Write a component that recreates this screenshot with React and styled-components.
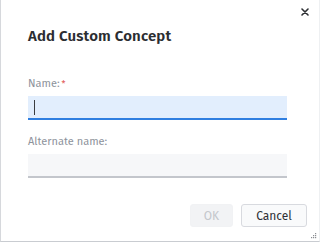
import React, { useState } from 'react';
import styled, { createGlobalStyle } from 'styled-components';

const GlobalStyle = createGlobalStyle`
    html, body {
        margin: 0;
        padding: 0;
        background: #ffffff;
    }
    body {
        font-family: "Fira Sans", "Open Sans", "Noto Sans", sans-serif;
    }
`

const Dialog = styled.div`
    position: relative;
    box-sizing: border-box;
    width: 320px;
    height: 242px;
    background: #ffffff;
    border-left: 1px solid #d6d8dc;
    border-right: 1px solid #eef0f2;
    border-bottom: 1px solid #c9ccd1;
    padding: 0 33px 0 27px;
    display: flex;
    flex-direction: column;
`
const CloseButton = styled.button`
    position: absolute;
    top: 6px;
    right: 8px;
    width: 12px;
    height: 12px;
    padding: 0;
    border: none;
    background: transparent;
    display: flex;
    align-items: center;
    justify-content: center;
    cursor: pointer;
`
const Title = styled.h2`
    margin: 26px 0 0;
    font-size: 15px;
    font-weight: 600;
    color: #2b2d31;
    line-height: 20px;
    letter-spacing: 0.15px;
`
const Field = styled.div`
    display: flex;
    flex-direction: column;
    margin-top: ${props => props.top}px;
`
const Label = styled.label`
    font-size: 11px;
    line-height: 14px;
    color: #8e939c;
    margin-bottom: 5px;
`
const Required = styled.span`
    color: #e0524f;
    font-size: 9px;
    vertical-align: top;
    margin-left: 2px;
`
const InputWrap = styled.div`
    position: relative;
    width: 259px;
`
const Caret = styled.span`
    position: absolute;
    left: 6px;
    top: 4px;
    width: 1px;
    height: 15px;
    background: #3a3c40;
    pointer-events: none;
`
const Input = styled.input`
    box-sizing: border-box;
    width: 259px;
    height: 24px;
    border: none;
    border-bottom: ${props => props.focused ? '2px solid #2f7ee0' : '2px solid #c3c6cc'};
    background: ${props => props.focused ? '#e2eefd' : '#f6f7f9'};
    padding: 0 6px;
    font-family: inherit;
    font-size: 12px;
    color: #333;
    outline: none;
    border-radius: 0;
    display: block;
`
const Footer = styled.div`
    margin-top: auto;
    margin-bottom: 14px;
    display: flex;
    justify-content: flex-end;
    gap: 8px;
    margin-right: -21px;
`
const Button = styled.button`
    box-sizing: border-box;
    height: 23px;
    min-width: ${props => props.wide ? 66 : 43}px;
    padding: 0 10px;
    border-radius: 3px;
    font-family: inherit;
    font-size: 12px;
    border: 1px solid ${props => props.disabled ? '#f1f2f4' : '#d8dadf'};
    background: ${props => props.disabled ? '#f2f3f5' : '#f9fafb'};
    color: ${props => props.disabled ? '#c4c7cc' : '#2f3136'};
`
const Grip = styled.svg`
    position: absolute;
    right: 2px;
    bottom: 2px;
`

const App = () => {
    const [name, setName] = useState('');
    const [alt, setAlt] = useState('');
    return (
        <>
            <GlobalStyle />
            <Dialog>
                <CloseButton aria-label="Close">
                    <svg width="8" height="8" viewBox="0 0 8 8">
                        <path d="M1 1 L7 7 M7 1 L1 7" stroke="#2d2f33" strokeWidth="1.6" strokeLinecap="round" />
                    </svg>
                </CloseButton>
                <Title>Add Custom Concept</Title>
                <Field top={31}>
                    <Label>Name:<Required>*</Required></Label>
                    <InputWrap>
                        <Input focused value={name} onChange={e => setName(e.target.value)} />
                        {name === '' && <Caret />}
                    </InputWrap>
                </Field>
                <Field top={15}>
                    <Label>Alternate name:</Label>
                    <InputWrap>
                        <Input value={alt} onChange={e => setAlt(e.target.value)} />
                    </InputWrap>
                </Field>
                <Footer>
                    <Button disabled>OK</Button>
                    <Button wide>Cancel</Button>
                </Footer>
                <Grip width="6" height="6" viewBox="0 0 6 6">
                    <rect x="4" y="0" width="1.2" height="1.2" fill="#8a8d92" />
                    <rect x="2" y="2" width="1.2" height="1.2" fill="#8a8d92" />
                    <rect x="4" y="2" width="1.2" height="1.2" fill="#8a8d92" />
                    <rect x="0" y="4" width="1.2" height="1.2" fill="#8a8d92" />
                    <rect x="2" y="4" width="1.2" height="1.2" fill="#8a8d92" />
                    <rect x="4" y="4" width="1.2" height="1.2" fill="#8a8d92" />
                </Grip>
            </Dialog>
        </>
    );
};
export default App;
